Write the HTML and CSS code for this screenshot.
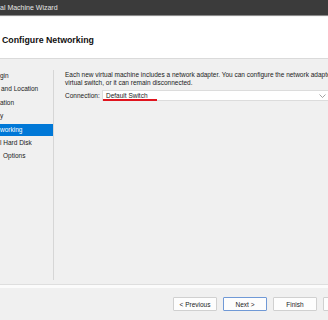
FILE: index.html
```html
<!DOCTYPE html>
<html lang="en">
<head>
    <meta charset="UTF-8">
    <title>New Virtual Machine Wizard</title>
    <link rel="stylesheet" href="styles.css">
</head>
<body>
    <div class="window">
        <div class="titlebar">al Machine Wizard</div>

        <div class="header">
            <h1>Configure Networking</h1>
        </div>

        <div class="main">
            <ul class="steps">
                <li>gin</li>
                <li class="cut">and Location</li>
                <li>ation</li>
                <li>y</li>
                <li class="active">working</li>
                <li>l Hard Disk</li>
                <li class="cut-more">Options</li>
            </ul>

            <div class="content">
                <p>Each new virtual machine includes a network adapter. You can configure the network adapter to use a<br>
                virtual switch, or it can remain disconnected.</p>

                <div class="field">
                    <span class="label">Connection:</span>
                    <div class="select">
                        <span class="value">Default Switch</span>
                        <span class="mark"></span>
                        <svg class="chevron" width="7" height="4" viewBox="0 0 7 4">
                            <polyline points="0.5,0.5 3.5,3.5 6.5,0.5" fill="none" stroke="#8a8a8a" stroke-width="0.8"/>
                        </svg>
                    </div>
                </div>
            </div>
        </div>

        <div class="footer">
            <button>&lt; Previous</button>
            <button class="default">Next &gt;</button>
            <button>Finish</button>
            <button>Cancel</button>
        </div>
    </div>
</body>
</html>
```

FILE: styles.css
```css
body {
    margin: 0;
    width: 328px;
    height: 320px;
    overflow: hidden;
    background-color: #f0f0f0;
    font-family: "Liberation Sans", Arial, sans-serif;
    font-size: 6.5px;
    color: #1a1a1a;
}
.window {
    display: flex;
    flex-direction: column;
    height: 320px;
}
.titlebar {
    height: 16px;
    line-height: 15px;
    background-color: #3b3b3b;
    color: #e6e6e6;
    font-size: 7px;
    white-space: nowrap;
    border-bottom: 1px solid #8a8a8a;
    box-sizing: border-box;
}
.header {
    height: 43px;
    background-color: #fff;
    border-top: 1px solid #f4f4f4;
    border-bottom: 1px solid #dadada;
    box-sizing: border-box;
}
h1 {
    margin: 0;
    padding: 18px 0 0 2px;
    font-size: 8.8px;
    font-weight: bold;
    color: #111;
}
.main {
    display: flex;
    height: 225px;
}
.steps {
    list-style: none;
    margin: 11px 0 4px 0;
    padding: 0;
    width: 53px;
    border-right: 1px solid #d6d6d6;
}
.steps li {
    height: 12px;
    line-height: 12px;
    margin-bottom: 1.4px;
    white-space: nowrap;
}
.steps .cut {
    padding-left: 1px;
}
.steps .cut-more {
    padding-left: 3px;
}
.steps .active {
    background-color: #0078d7;
    color: #fff;
}
.content {
    flex: 1;
    padding: 12px 0 0 11px;
    white-space: nowrap;
    overflow: hidden;
}
.content p {
    margin: 0;
    line-height: 8px;
}
.field {
    display: flex;
    align-items: center;
    margin-top: 3px;
}
.label {
    width: 37px;
}
.select {
    position: relative;
    flex: 1;
    height: 11px;
    line-height: 10px;
    padding-left: 3px;
    background-color: #fff;
    border: 1px solid #dcdcdc;
    border-right: none;
    box-sizing: border-box;
}
.mark {
    position: absolute;
    left: 0;
    top: 8px;
    width: 54px;
    height: 1.5px;
    background-color: #e0141e;
}
.chevron {
    position: absolute;
    right: 2px;
    top: 3px;
}
.footer {
    flex: 1;
    display: flex;
    gap: 6px;
    padding: 12px 0 0 173px;
    border-top: 1px solid #dedede;
    box-shadow: inset 0 3px 0 #fbfbfb;
    white-space: nowrap;
}
.footer button {
    flex: none;
    width: 44px;
    height: 14px;
    padding: 0;
    font-family: inherit;
    font-size: 6.5px;
    color: #1a1a1a;
    background-color: #fdfdfd;
    border: 1px solid #d0d0d0;
    border-radius: 1px;
}
.footer .default {
    border-color: #7099d6;
}
```
